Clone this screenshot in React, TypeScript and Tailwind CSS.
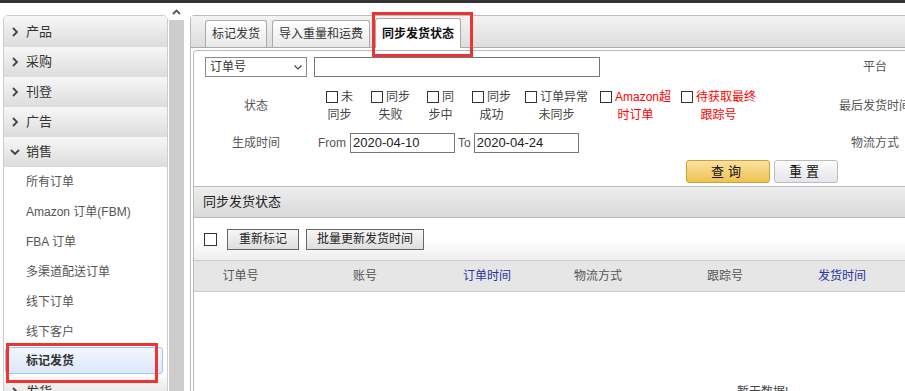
import React from "react";

const Right = () => (
  <svg width="10" height="10" viewBox="0 0 10 10" className="shrink-0">
    <polyline points="3,1 7,5 3,9" fill="none" stroke="#444" strokeWidth="1.8" />
  </svg>
);

const Down = () => (
  <svg width="10" height="10" viewBox="0 0 10 10" className="shrink-0">
    <polyline points="1,3 5,7 9,3" fill="none" stroke="#444" strokeWidth="1.8" />
  </svg>
);

const Box = ({ size = "w-[12px] h-[12px]" }: { size?: string }) => (
  <span className={`inline-block ${size} border border-[#333] bg-white align-[-2px] mr-[3px]`} />
);

const menus = ["产品", "采购", "刊登", "广告"];
const subs = ["所有订单", "Amazon 订单(FBM)", "FBA 订单", "多渠道配送订单", "线下订单", "线下客户"];

const statuses = [
  { a: "未", b: "同步", w: "w-[45px]", red: false },
  { a: "同步", b: "失败", w: "w-[56px]", red: false },
  { a: "同", b: "步中", w: "w-[45px]", red: false },
  { a: "同步", b: "成功", w: "w-[53px]", red: false },
  { a: "订单异常", b: "未同步", w: "w-[75px]", red: false },
  { a: "Amazon超", b: "时订单", w: "w-[81px]", red: true },
  { a: "待获取最终", b: "跟踪号", w: "w-[130px]", red: true },
];

const cols = [
  { t: "订单号", w: "w-[93px]", link: false },
  { t: "账号", w: "w-[156px]", link: false },
  { t: "订单时间", w: "w-[88px]", link: true },
  { t: "物流方式", w: "w-[134px]", link: false },
  { t: "跟踪号", w: "w-[120px]", link: false },
  { t: "发货时间", w: "w-[114px]", link: true },
];

const Sidebar = () => (
  <div className="ml-[3px] mt-[12px] w-[165px] h-[400px] shrink-0 border border-[#ccc] rounded-t-[5px] bg-white overflow-hidden">
    {menus.map((m, i) => (
      <div
        key={m}
        className={`${i === 0 ? "h-[31px]" : "h-[30px]"} flex items-center gap-[6px] pl-[6px] bg-gradient-to-b from-[#f7f7f7] to-[#dcdcdc] text-[13px] text-[#333]`}
      >
        <Right />
        {m}
      </div>
    ))}
    <div className="h-[30px] flex items-center gap-[6px] pl-[6px] bg-gradient-to-b from-[#f7f7f7] to-[#dcdcdc] text-[13px] text-[#333]">
      <Down />
      销售
    </div>
    {subs.map((s) => (
      <div key={s} className="h-[30px] flex items-center pl-[22px] text-[12px] text-[#555]">
        {s}
      </div>
    ))}
    <div className="h-[30px] pt-[0px]">
      <div className="ml-[1px] mr-[4px] h-[27px] flex items-center pl-[20px] rounded-[3px] border border-[#a5c4ea] bg-gradient-to-b from-[#f2f7fe] to-[#dbe8f9] text-[12px] font-bold text-[#333]">
        标记发货
      </div>
    </div>
    <div className="h-[30px] flex items-center gap-[6px] pl-[6px] bg-gradient-to-b from-[#f7f7f7] to-[#dcdcdc] text-[13px] text-[#333]">
      <Right />
      发货
    </div>
  </div>
);

const Scroll = () => (
  <div className="ml-[1px] w-[15px] h-[400px] shrink-0 flex flex-col">
    <div className="h-[17px] flex items-center justify-center">
      <svg width="9" height="6" viewBox="0 0 9 6">
        <polyline points="1,5 4.5,1.5 8,5" fill="none" stroke="#555" strokeWidth="1.8" />
      </svg>
    </div>
    <div className="flex-1 bg-[#cdcdcd]" />
  </div>
);

const Input = ({ w, v = "" }: { w: string; v?: string }) => (
  <div className={`${w} h-[20px] border border-[#777] bg-white flex items-center pl-[2px] text-[13px] text-[#222]`}>{v}</div>
);

export default function App() {
  return (
    <div className="relative w-[905px] h-[391px] overflow-hidden bg-white font-['Liberation_Sans','Noto_Sans_CJK_SC',sans-serif]">
      <div className="h-[3px] bg-[#333]" />
      <div className="flex">
        <Sidebar />
        <Scroll />
        <div className="ml-[6px] mt-[12px] w-[1120px] shrink-0 border border-[#bbb] rounded-t-[4px]">
          <div className="h-[32px] flex items-end gap-[5px] pl-[14px] border-b border-[#aaa] bg-gradient-to-b from-[#f3f3f3] to-[#dddddd]">
            <div className="h-[27px] px-[6px] flex items-center border-x border-t border-[#aaa] rounded-t-[3px] bg-gradient-to-b from-[#ffffff] to-[#e9e9e9] text-[12px] text-[#333]">
              标记发货
            </div>
            <div className="h-[27px] px-[6px] flex items-center border-x border-t border-[#aaa] rounded-t-[3px] bg-gradient-to-b from-[#ffffff] to-[#e9e9e9] text-[12px] text-[#333]">
              导入重量和运费
            </div>
            <div className="h-[30px] -mb-px px-[6px] flex items-center border-x border-t border-[#aaa] rounded-t-[3px] bg-white text-[12px] font-bold text-[#111]">
              同步发货状态
            </div>
          </div>

          <div className="ml-[2px] mt-[2px] border-l border-t border-[#bbb] rounded-tl-[4px] h-[400px]">
            {/* row 1 */}
            <div className="flex items-center pt-[6px]">
              <div className="w-[618px] flex items-center pl-[11px] gap-[7px]">
                <div className="w-[102px] h-[20px] border border-[#888] flex items-center justify-between px-[4px] text-[12px] text-[#333]">
                  订单号
                  <svg width="8" height="5" viewBox="0 0 8 5">
                    <polyline points="0.5,0.5 4,4 7.5,0.5" fill="none" stroke="#444" strokeWidth="1.2" />
                  </svg>
                </div>
                <Input w="w-[286px]" />
              </div>
              <div className="w-[126px] text-center text-[12px] text-[#555]">平台</div>
            </div>

            {/* row 2 */}
            <div className="flex items-center mt-[11px]">
              <div className="w-[124px] text-center text-[12px] text-[#555]">状态</div>
              <div className="w-[494px] flex pl-[8px] text-[12px] leading-[18px]">
                {statuses.map((s) => (
                  <div key={s.a} className={`${s.w} shrink-0`}>
                    <div className={`inline-block text-center ${s.red ? "text-[#ff0000]" : "text-[#444]"}`}>
                      <Box />
                      {s.a}
                      <br />
                      {s.b}
                    </div>
                  </div>
                ))}
              </div>
              <div className="w-[126px] text-center text-[12px] text-[#555] whitespace-nowrap">最后发货时间</div>
            </div>

            {/* row 3 */}
            <div className="flex items-center mt-[9px]">
              <div className="w-[124px] text-center text-[12px] text-[#555]">生成时间</div>
              <div className="w-[494px] flex items-center text-[12px] text-[#555]">
                <span className="mr-[4px]">From</span>
                <Input w="w-[105px]" v="2020-04-10" />
                <span className="ml-[3px] mr-[3px]">To</span>
                <Input w="w-[105px]" v="2020-04-24" />
              </div>
              <div className="w-[126px] text-center text-[12px] text-[#555]">物流方式</div>
            </div>

            {/* row 4 */}
            <div className="flex mt-[7px] pl-[492px] gap-[4px]">
              <div className="w-[84px] h-[23px] flex items-center justify-center rounded-[3px] border border-[#c9a240] bg-gradient-to-b from-[#fbe29c] to-[#efc251] text-[13px] tracking-[4px] text-[#111]">
                查询
              </div>
              <div className="w-[64px] h-[23px] flex items-center justify-center rounded-[3px] border border-[#bcbcc4] bg-gradient-to-b from-[#fcfcfc] to-[#e4e4ea] text-[13px] tracking-[4px] text-[#111]">
                重置
              </div>
            </div>

            {/* section */}
            <div className="mt-[3px] h-[32px] flex items-center pl-[9px] border-y border-[#bbb] bg-gradient-to-b from-[#ededed] to-[#dadada] text-[13px] text-[#222]">
              同步发货状态
            </div>
            <div className="h-[43px] flex items-center pl-[10px] border-b border-[#ccc] bg-gradient-to-b from-[#ffffff] via-[#ffffff] to-[#eeeeee]">
              <span className="w-[13px] h-[13px] border border-[#333] bg-white" />
              <div className="ml-[10px] w-[72px] h-[21px] flex items-center justify-center border border-[#666] bg-gradient-to-b from-[#f7f7f7] to-[#dedede] text-[12px] text-[#222]">
                重新标记
              </div>
              <div className="ml-[7px] w-[118px] h-[21px] flex items-center justify-center border border-[#666] bg-gradient-to-b from-[#f7f7f7] to-[#dedede] text-[12px] text-[#222]">
                批量更新发货时间
              </div>
            </div>
            <div className="h-[31px] flex items-center border-b border-[#ccc] bg-[#e6e6e6] text-[12px]">
              {cols.map((c) => (
                <div key={c.t} className={`${c.w} shrink-0 text-center ${c.link ? "text-[#27349e]" : "text-[#555]"}`}>
                  {c.t}
                </div>
              ))}
            </div>
            <div className="pt-[91px] pl-[543px] text-[12px] text-[#444]">暂无数据!</div>
          </div>
        </div>
      </div>

      <div className="absolute left-[6px] top-[343px] w-[152px] h-[40px] border-[3px] border-[#ee3333]" />
      <div className="absolute left-[372px] top-[12px] w-[101px] h-[45px] border-[3px] border-[#ee3333]" />
    </div>
  );
}
